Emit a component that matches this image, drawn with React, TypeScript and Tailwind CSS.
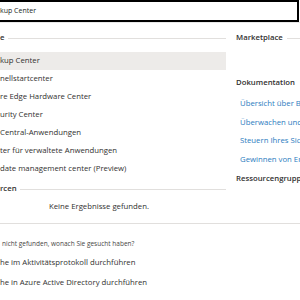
const rows = [
	"kup Center",
	"nellstartcenter",
	"re Edge Hardware Center",
	"urity Center",
	"Central-Anwendungen",
	"ter für verwaltete Anwendungen",
	"date management center (Preview)",
];

const docs = ["Übersicht über Backup", "Überwachen und Berichten", "Steuern Ihres Sicherungsbestands", "Gewinnen von Erkenntnissen"];

function SectionHeader({ label, lineClass }: { label: string; lineClass: string }) {
	return (
		<div className="h-[18px] flex items-center">
			<span className="font-semibold whitespace-nowrap">{label}</span>
			<div className={`h-px flex-1 bg-[#e1dfdd] ${lineClass}`} />
		</div>
	);
}

export default function App() {
	return (
		<div className="w-[300px] h-[300px] overflow-hidden bg-white text-[#323130] text-[7.75px] font-['Open_Sans',sans-serif]">
			<div className="w-[299px] h-[22px] border-2 border-l-0 border-black flex items-center text-[7px] leading-none pb-[1px] text-[#201f1e]">
				kup Center
			</div>
			<div className="h-px bg-[#e8e8e8]" />
			<div className="flex pt-[6px]">
				<div className="w-[228px] shrink-0 flex-col flex">
					<SectionHeader label="e" lineClass="ml-[4px] mr-[2px]" />
					<div className="flex-col flex mt-[5px]">
						{rows.map((r, i) => (
							<div
								key={r}
								className={`h-[18px] flex items-center whitespace-nowrap ${i === 0 ? "bg-[#edebe9] mr-[2px]" : ""}`}
							>
								{r}
							</div>
						))}
					</div>
					<div className="mt-[2px]">
						<SectionHeader label="rcen" lineClass="ml-[3px] mr-[2px]" />
					</div>
					<div className="h-[18px] flex items-center pl-[49px]">Keine Ergebnisse gefunden.</div>
				</div>
				<div className="flex-1 flex-col flex pl-[8px]">
					<SectionHeader label="Marketplace" lineClass="ml-[4px]" />
					<div className="h-[18px] flex items-center font-semibold mt-[27px]">Dokumentation</div>
					<div className="flex-col flex mt-[3px] pl-[4px]">
						{docs.map((d) => (
							<div key={d} className="h-[18.5px] flex items-center whitespace-nowrap text-[#2b7cc0]">
								{d}
							</div>
						))}
					</div>
					<div className="h-[18px] flex items-center font-semibold whitespace-nowrap mt-[1px]">Ressourcengruppen</div>
				</div>
			</div>
			<div className="h-px bg-[#e1dfdd] mt-[7px]" />
			<div className="flex-col flex pt-[13px]">
				<div className="h-[14px] flex items-center text-[6.5px] pl-[2px] text-[#484644]">
					nicht gefunden, wonach Sie gesucht haben?
				</div>
				<div className="h-[18px] flex items-center mt-[3px]">he im Aktivitätsprotokoll durchführen</div>
				<div className="h-[19px] flex items-center mt-[1px]">he in Azure Active Directory durchführen</div>
			</div>
		</div>
	);
}
